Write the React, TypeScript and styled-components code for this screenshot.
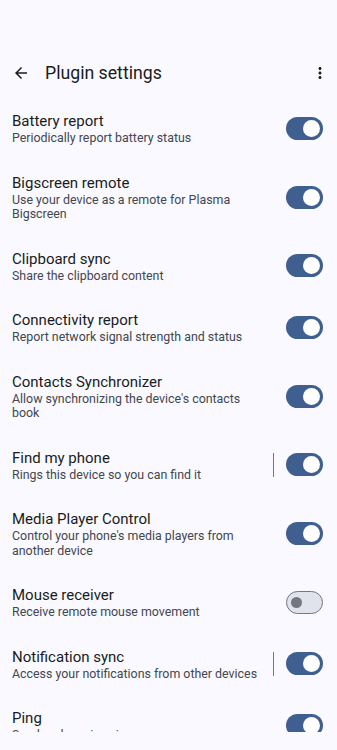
import React from "react";
import styled, { createGlobalStyle } from "styled-components";

const Global = createGlobalStyle`
  html, body { margin: 0; padding: 0; background: #f9f9ff; }
  body { font-family: Roboto, "Noto Sans", sans-serif; -webkit-font-smoothing: antialiased; }
`;

const Page = styled.div`
  width: 337px;
  height: 750px;
  overflow: hidden;
  background: #f9f9ff;
  position: relative;
`;

const AppBar = styled.header`
  display: flex;
  align-items: center;
  height: 50px;
  margin-top: 48px;
  padding: 0 8px 0 12px;
`;

const IconButton = styled.button`
  display: flex;
  align-items: center;
  justify-content: center;
  width: 18px;
  height: 18px;
  padding: 0;
  border: 0;
  background: none;
  color: #1a1c20;
`;

const Title = styled.h1`
  flex: 1;
  margin: 0 0 0 15px;
  font-size: 17.7px;
  font-weight: 400;
  color: #1a1c20;
`;

const List = styled.div`
  display: flex;
  flex-direction: column;
`;

const Row = styled.div`
  display: grid;
  grid-template-columns: 1fr 16px 37px;
  align-items: center;
  padding: 13px 14px 14px 12px;
`;

const Texts = styled.div`
  min-width: 0;
`;

const RowTitle = styled.div`
  font-size: 15px;
  line-height: 20px;
  color: #1a1c20;
`;

const RowSub = styled.div`
  font-size: 12.4px;
  line-height: 14.5px;
  color: #44474e;
`;

const DividerSlot = styled.div`
  display: flex;
  align-items: center;
  height: 100%;
`;

const Divider = styled.div`
  width: 1px;
  height: 24px;
  background: #74777f;
  margin-left: 3px;
`;

const Track = styled.div<{ $on: boolean }>`
  box-sizing: border-box;
  width: 37px;
  height: 23px;
  border-radius: 12px;
  display: flex;
  align-items: center;
  justify-content: ${(p) => (p.$on ? "flex-end" : "flex-start")};
  padding: ${(p) => (p.$on ? "0 3px" : "0 4px")};
  background: ${(p) => (p.$on ? "#3f5f90" : "#e0e2ec")};
  border: ${(p) => (p.$on ? "none" : "1.5px solid #74777f")};
`;

const Thumb = styled.div<{ $on: boolean }>`
  width: ${(p) => (p.$on ? "17px" : "11px")};
  height: ${(p) => (p.$on ? "17px" : "11px")};
  border-radius: 50%;
  background: ${(p) => (p.$on ? "#ffffff" : "#74777f")};
`;

const NavBar = styled.div`
  position: absolute;
  left: 0;
  right: 0;
  bottom: 0;
  height: 18px;
  background: #f9f9ff;
`;

type Item = { title: string; sub: string; on: boolean; divider?: boolean };

const items: Item[] = [
  { title: "Battery report", sub: "Periodically report battery status", on: true },
  { title: "Bigscreen remote", sub: "Use your device as a remote for Plasma Bigscreen", on: true },
  { title: "Clipboard sync", sub: "Share the clipboard content", on: true },
  { title: "Connectivity report", sub: "Report network signal strength and status", on: true },
  { title: "Contacts Synchronizer", sub: "Allow synchronizing the device's contacts book", on: true },
  { title: "Find my phone", sub: "Rings this device so you can find it", on: true, divider: true },
  { title: "Media Player Control", sub: "Control your phone's media players from another device", on: true },
  { title: "Mouse receiver", sub: "Receive remote mouse movement", on: false },
  { title: "Notification sync", sub: "Access your notifications from other devices", on: true, divider: true },
  { title: "Ping", sub: "Send and receive pings", on: true },
];

export default function App() {
  return (
    <Page>
      <Global />
      <AppBar>
        <IconButton aria-label="Back">
          <svg width="18" height="18" viewBox="0 0 24 24" fill="currentColor">
            <path d="M20 11H7.83l5.59-5.59L12 4l-8 8 8 8 1.41-1.41L7.83 13H20v-2z" />
          </svg>
        </IconButton>
        <Title>Plugin settings</Title>
        <IconButton aria-label="More">
          <svg width="18" height="18" viewBox="0 0 24 24" fill="currentColor">
            <path d="M12 8c1.1 0 2-.9 2-2s-.9-2-2-2-2 .9-2 2 .9 2 2 2zm0 2c-1.1 0-2 .9-2 2s.9 2 2 2 2-.9 2-2-.9-2-2-2zm0 6c-1.1 0-2 .9-2 2s.9 2 2 2 2-.9 2-2-.9-2-2-2z" />
          </svg>
        </IconButton>
      </AppBar>
      <List>
        {items.map((it) => (
          <Row key={it.title}>
            <Texts>
              <RowTitle>{it.title}</RowTitle>
              <RowSub>{it.sub}</RowSub>
            </Texts>
            <DividerSlot>{it.divider && <Divider />}</DividerSlot>
            <Track $on={it.on}>
              <Thumb $on={it.on} />
            </Track>
          </Row>
        ))}
      </List>
      <NavBar />
    </Page>
  );
}
